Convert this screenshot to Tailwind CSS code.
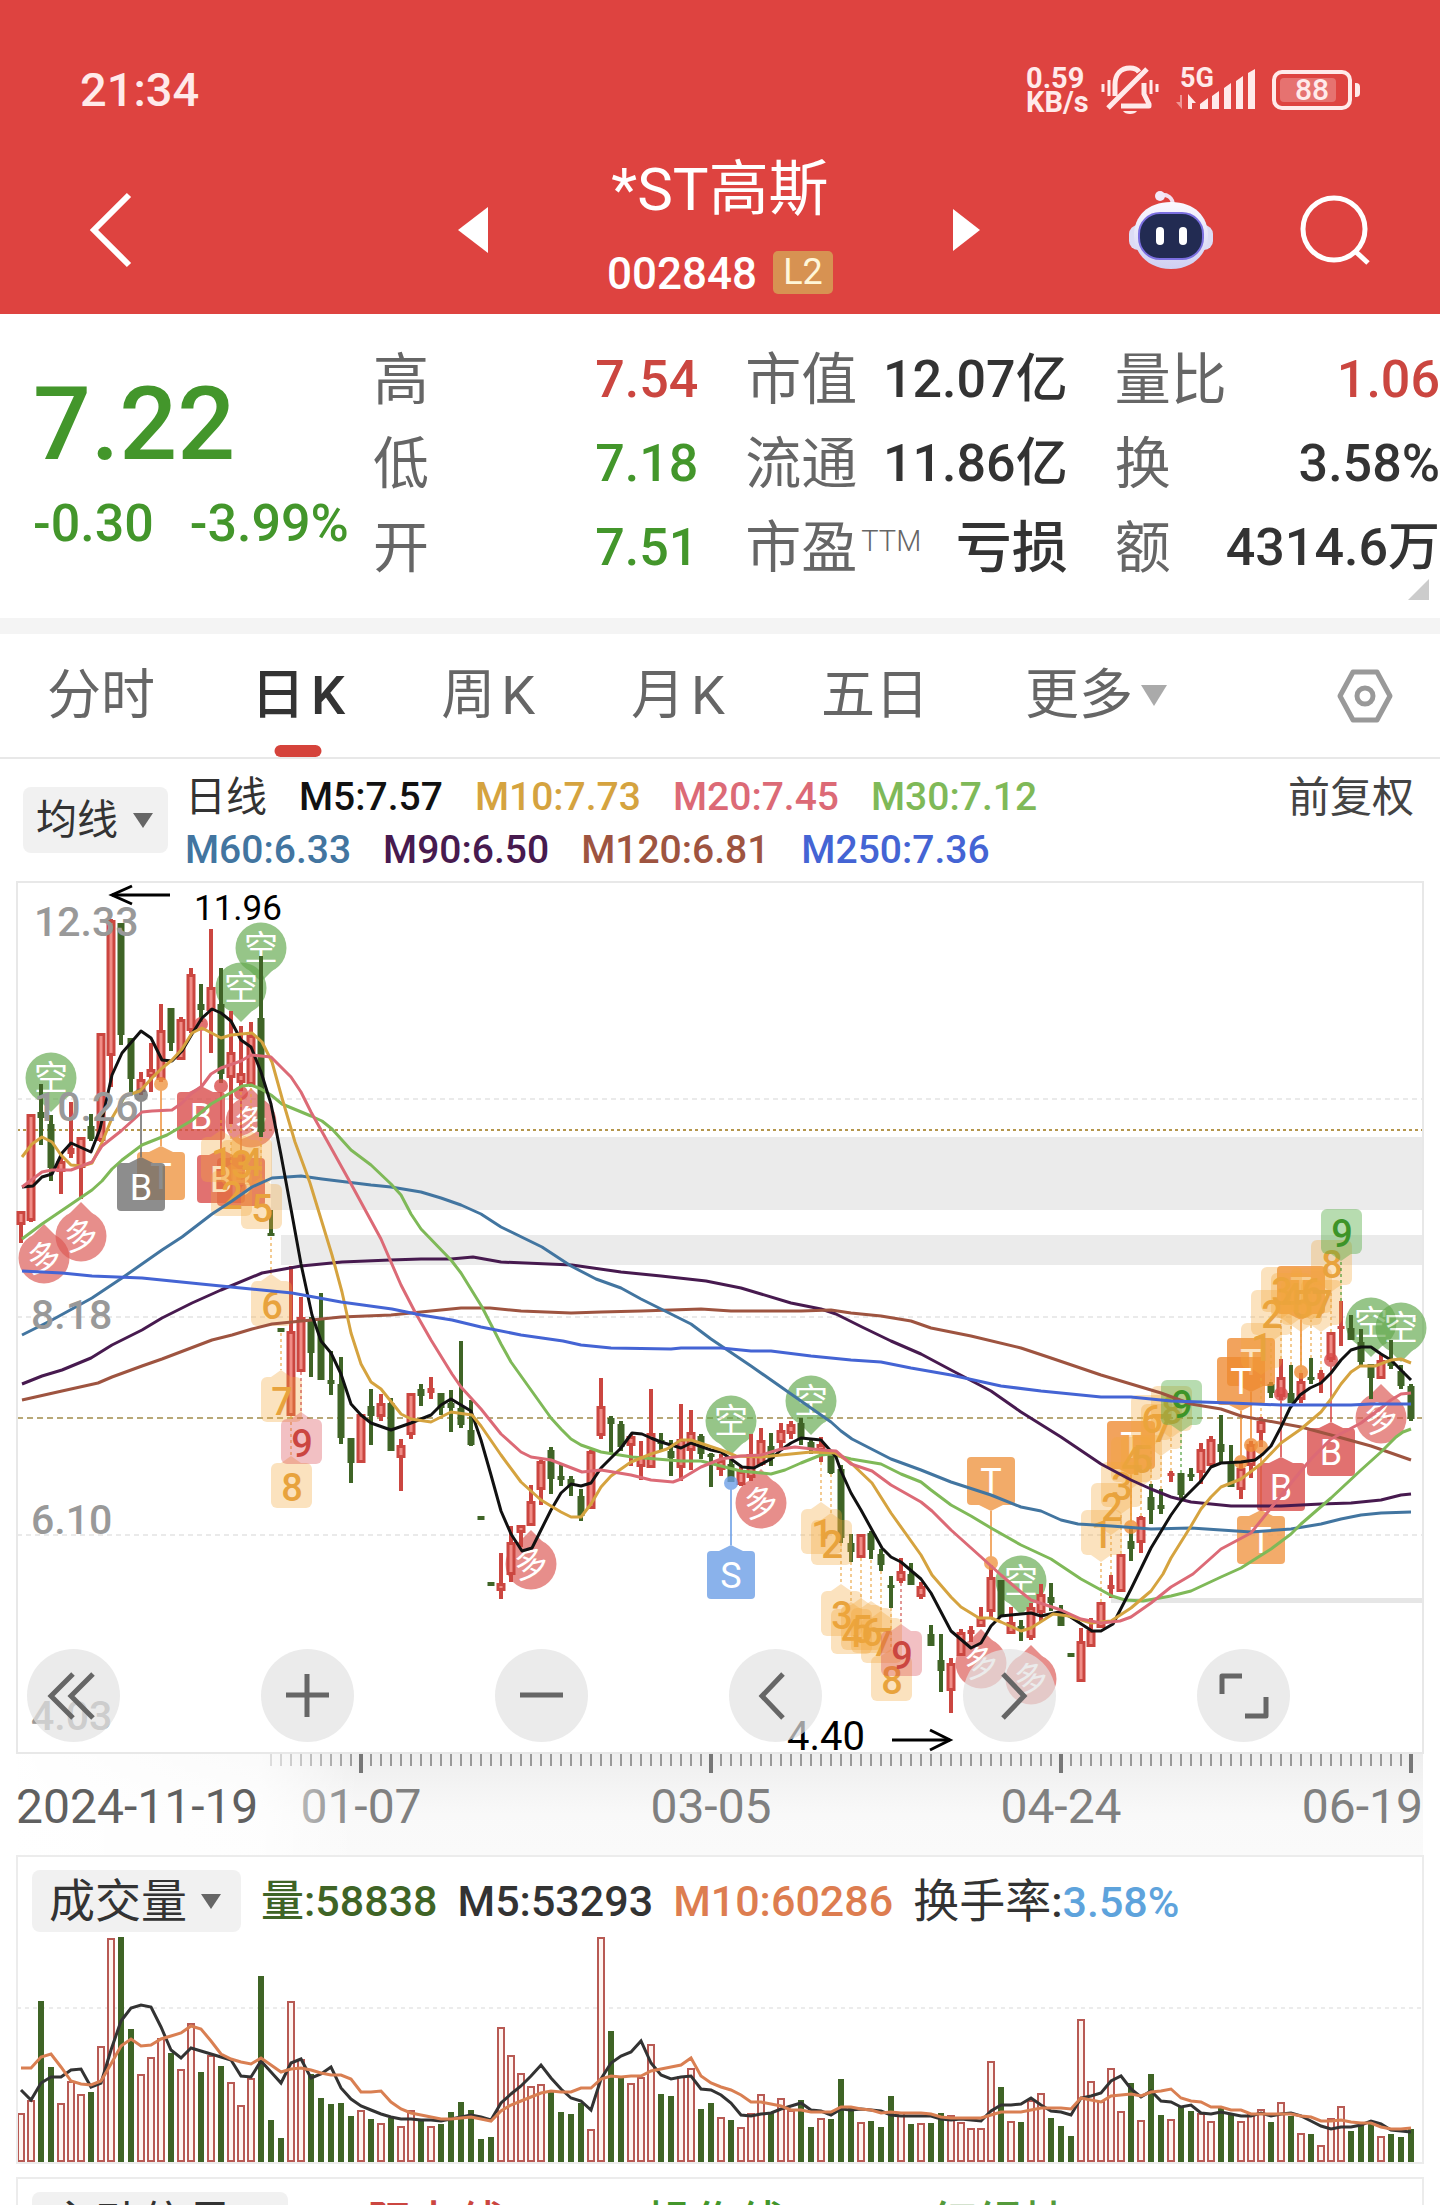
<!DOCTYPE html>
<html lang="zh-CN">
<head>
<meta charset="utf-8">
<meta name="viewport" content="width=device-width, initial-scale=1">
<title>*ST高斯 002848</title>
<script src="https://cdn.jsdelivr.net/npm/@tailwindcss/browser@4"></script>
</head>
<body class="bg-white font-['Roboto','Noto_Sans_CJK_SC',sans-serif] text-[#333] overflow-x-hidden">

<header class="bg-[#de4340] h-[314px] text-white">
  <div class="flex items-center justify-between pt-[56px] pl-20 pr-20 h-[124px] text-[#ffeaea]">
    <time class="text-[47px] leading-[68px] font-medium">21:34</time>
    <div class="flex items-center">
      <div class="text-[29px] leading-[24px] font-bold w-[62px] mr-[13px]">0.59<br>KB/s</div>
      <svg class="w-[58px] h-[50px] mr-[17px]" viewBox="0 0 58 50" fill="none" stroke="currentColor" stroke-width="4" aria-label="静音">
        <path d="M14 31V20C14 9 20 3 29 3c4 0 7 1 9 4M43 18v11l5 10v2H20M7 43L46 4" stroke-linejoin="round" stroke-width="5"/>
        <path d="M22 46h14c-2 4-12 4-14 0z" fill="currentColor" stroke="none"/>
        <path d="M2 19v8M8 15v16M50 15v14M56 19v8" stroke-width="3"/>
      </svg>
      <div class="w-[82px] h-[44px] relative mr-[14px]">
        <span class="absolute left-1 -top-1 text-[27px] leading-[28px] font-bold">5G</span>
        <svg class="w-full h-full" viewBox="0 0 82 44" fill="currentColor" aria-hidden="true">
          <path d="M6 27v14l-6-7h4v-7z" opacity=".5"/><path d="M12 41V26l8 9h-4v6z"/>
          <path d="M24 41v-5l8-6v11zM36 41V28l7-5v18zM48 41V20l7-5v26zM60 41V13l7-5v33zM72 41V5l7-4v40z"/>
        </svg>
      </div>
      <div class="relative flex items-center">
        <div class="w-[80px] h-[40px] rounded-[10px] border-4 border-current p-1">
          <div class="w-[56px] h-full bg-white/25 rounded-sm"></div>
        </div>
        <div class="w-[5px] h-[14px] rounded-r bg-current ml-[3px]"></div>
        <span class="absolute left-0 w-[80px] text-center text-[30px] leading-[40px] font-medium">88</span>
      </div>
    </div>
  </div>
  <div class="grid grid-cols-[1fr_465px_1fr] items-center pt-[26px]">
    <div class="flex items-center justify-between pl-[88px]">
      <button aria-label="返回"><svg class="w-11 h-[76px]" viewBox="0 0 44 76" fill="none" stroke="white" stroke-width="6"><path d="M41 3L6 38l35 35"/></svg></button>
      <button aria-label="上一只"><svg class="w-[30px] h-[46px]" viewBox="0 0 30 46" fill="white"><path d="M30 0v46L0 23z"/></svg></button>
    </div>
    <div class="flex flex-col items-center">
      <h1 class="text-[60px] leading-[80px] whitespace-nowrap">*ST高斯</h1>
      <div class="flex items-center gap-4 h-[80px] pt-1">
        <span class="text-[44px] leading-none font-medium pt-1">002848</span>
        <span class="bg-[#d79252] rounded-[5px] w-[60px] h-[43px] text-center text-[36px] leading-[43px] text-[#fff6d8]">L2</span>
      </div>
    </div>
    <div class="flex items-center">
      <button aria-label="下一只"><svg class="w-[27px] h-[42px]" viewBox="0 0 27 42" fill="white"><path d="M0 0v42l27-21z"/></svg></button>
      <button class="ml-[148px]" aria-label="智能助手"><svg class="w-[86px] h-[82px]" viewBox="0 0 86 82">
        <defs><linearGradient id="shell" x1="0" y1="0" x2="0" y2="1"><stop offset="0" stop-color="#fbf8ff"/><stop offset="1" stop-color="#cfd0f2"/></linearGradient></defs>
        <path d="M32 6c7-1 13 2 13 11" fill="none" stroke="#f3dff0" stroke-width="4"/><circle cx="32" cy="7" r="5" fill="#f3e9fa"/>
        <rect x="1" y="36" width="84" height="25" rx="9" fill="#dcdcf5"/>
        <path d="M43 13c24 0 37 15 37 33S66 80 43 80 6 64 6 46s13-33 37-33z" fill="url(#shell)"/>
        <rect x="11" y="24" width="64" height="46" rx="21" fill="#222b52" stroke="#7b6fe0" stroke-width="2"/>
        <rect x="28" y="38" width="8" height="18" rx="4" fill="white"/><rect x="51" y="38" width="8" height="18" rx="4" fill="white"/>
      </svg></button>
      <button class="ml-[84px]" aria-label="搜索"><svg class="w-[74px] h-[74px]" viewBox="0 0 74 74" fill="none" stroke="white" stroke-width="5"><circle cx="36" cy="36" r="31"/><path d="M57 58l13 12"/></svg></button>
    </div>
  </div>
</header>

<main>
<section class="flex h-[304px] pt-6 relative">
  <div class="w-[373px] pl-[33px] pt-[36px] text-[#43962b] font-medium shrink-0">
    <div class="text-[102px] leading-[100px]">7.22</div>
    <div class="text-[52px] leading-[60px] pt-[20px] whitespace-nowrap flex gap-[36px]"><span>-0.30</span><span>-3.99%</span></div>
  </div>
  <div class="flex-1 grid grid-cols-[325fr_322fr_325fr] gap-x-[47px] text-[52px] leading-[84px] whitespace-nowrap h-[252px]">
    <dl>
      <div class="flex justify-between"><dt class="text-[#666] text-[56px]">高</dt><dd class="font-medium text-[#cb4640]">7.54</dd></div>
      <div class="flex justify-between"><dt class="text-[#666] text-[56px]">低</dt><dd class="font-medium text-[#43962b]">7.18</dd></div>
      <div class="flex justify-between"><dt class="text-[#666] text-[56px]">开</dt><dd class="font-medium text-[#43962b]">7.51</dd></div>
    </dl>
    <dl>
      <div class="flex justify-between"><dt class="text-[#666] text-[56px]">市值</dt><dd class="font-medium">12.07亿</dd></div>
      <div class="flex justify-between"><dt class="text-[#666] text-[56px]">流通</dt><dd class="font-medium">11.86亿</dd></div>
      <div class="flex justify-between"><dt class="text-[#666] text-[56px] flex">市盈<span class="text-[29px] leading-[70px] font-light pl-1">TTM</span></dt><dd class="font-medium text-[56px]">亏损</dd></div>
    </dl>
    <dl>
      <div class="flex justify-between"><dt class="text-[#666] text-[56px]">量比</dt><dd class="font-medium text-[#cb4640]">1.06</dd></div>
      <div class="flex justify-between"><dt class="text-[#666] text-[56px]">换</dt><dd class="font-medium">3.58%</dd></div>
      <div class="flex justify-between"><dt class="text-[#666] text-[56px]">额</dt><dd class="font-medium">4314.6万</dd></div>
    </dl>
  </div>
  <svg class="absolute right-[11px] bottom-[18px] w-[21px] h-[21px]" viewBox="0 0 21 21" fill="#ccc" aria-hidden="true"><path d="M21 0v21H0z"/></svg>
</section>

<div class="h-4 bg-[#f4f4f4]"></div>

<nav class="h-[125px] border-b-2 border-[#e8e8e8] flex items-center pl-[47px] pr-[47px] gap-24 text-[54px] leading-[123px] text-[#666] whitespace-nowrap">
  <button>分时</button>
  <button class="relative text-[#333] font-medium flex gap-[6px]">日<span>K</span><span class="absolute left-1/2 -translate-x-1/2 bottom-0 w-[47px] h-3 rounded-[6px] bg-[#d5433b]"></span></button>
  <button class="flex gap-[6px]">周<span>K</span></button>
  <button class="flex gap-[6px]">月<span>K</span></button>
  <button>五日</button>
  <button class="flex items-center gap-2">更多<svg class="w-[26px] h-[21px]" viewBox="0 0 26 21" fill="#aaa"><path d="M0 0h26L13 21z"/></svg></button>
  <button class="ml-auto" aria-label="设置"><svg class="w-14 h-[54px]" viewBox="0 0 56 54" fill="none" stroke="#999" stroke-width="5" stroke-linejoin="round"><path d="M16 3h24l13 24-13 24H16L3 27z"/><circle cx="28" cy="27" r="8"/></svg></button>
</nav>

<section class="flex items-start h-[114px] pl-[23px] pr-[26px] font-medium whitespace-nowrap">
  <div class="relative mt-7">
    <select aria-label="主图指标" class="appearance-none block bg-[#f1f1f1] rounded-lg w-[145px] h-[66px] pl-[13px] text-[41px] leading-[66px] font-normal"><option>均线</option></select>
    <svg class="absolute right-[15px] top-[26px] w-[20px] h-[15px] pointer-events-none" viewBox="0 0 20 15" fill="#666"><path d="M0 0h20L10 15z"/></svg>
  </div>
  <div class="ml-[17px] text-[39px] leading-[53px] pt-3">
    <div class="flex gap-8"><span class="font-normal text-[41px]">日线</span><span class="text-[#111]">M5:7.57</span><span class="text-[#d5a33f]">M10:7.73</span><span class="text-[#dc6a76]">M20:7.45</span><span class="text-[#7fb958]">M30:7.12</span></div>
    <div class="flex gap-8"><span class="text-[#4275a0]">M60:6.33</span><span class="text-[#471a4f]">M90:6.50</span><span class="text-[#9e5440]">M120:6.81</span><span class="text-[#4464d4]">M250:7.36</span></div>
  </div>
  <button class="ml-auto text-[42px] leading-[53px] pt-3 font-normal text-[#444]">前复权</button>
</section>

<section class="relative">
  <svg id="kline" class="block w-full" viewBox="0 873 1440 982" role="img" aria-label="日K线图"></svg>
  <div class="absolute left-[27px] bottom-[113px] flex gap-[141px]">
    <button aria-label="最早" class="size-[93px] rounded-full bg-[#e3e3e3]/70 grid place-items-center"><svg class="size-[93px]" viewBox="0 0 93 93" fill="none" stroke="#666" stroke-width="5"><path d="M46 25L24 47l22 22M66 25L44 47l22 22"/></svg></button>
    <button aria-label="放大" class="size-[93px] rounded-full bg-[#e3e3e3]/70 grid place-items-center"><svg class="size-[93px]" viewBox="0 0 93 93" fill="none" stroke="#666" stroke-width="5"><path d="M25 46h43M46 25v43"/></svg></button>
    <button aria-label="缩小" class="size-[93px] rounded-full bg-[#e3e3e3]/70 grid place-items-center"><svg class="size-[93px]" viewBox="0 0 93 93" fill="none" stroke="#666" stroke-width="5"><path d="M25 46h43"/></svg></button>
    <button aria-label="左移" class="size-[93px] rounded-full bg-[#e3e3e3]/70 grid place-items-center"><svg class="size-[93px]" viewBox="0 0 93 93" fill="none" stroke="#666" stroke-width="5"><path d="M54 25L33 47l21 22"/></svg></button>
    <button aria-label="右移" class="size-[93px] rounded-full bg-[#e3e3e3]/70 grid place-items-center"><svg class="size-[93px]" viewBox="0 0 93 93" fill="none" stroke="#666" stroke-width="5"><path d="M40 25l21 22-21 22"/></svg></button>
    <button aria-label="全屏" class="size-[93px] rounded-full bg-[#e3e3e3]/70 grid place-items-center"><svg class="size-[93px]" viewBox="0 0 93 93" fill="none" stroke="#666" stroke-width="5" stroke-linejoin="round"><path d="M25 45V27h20M69 48v19H48"/></svg></button>
  </div>
</section>

<section class="ml-4 mr-4 border-2 border-[#ececec]">
  <div class="flex items-center pl-[14px] pt-[13px] h-[75px] text-[43px] font-medium whitespace-nowrap gap-5">
    <div class="relative">
      <select aria-label="副图指标一" class="appearance-none block bg-[#f1f1f1] rounded-lg w-[209px] h-[62px] pl-[17px] text-[46px] leading-[62px] font-normal"><option>成交量</option></select>
      <svg class="absolute right-[20px] top-[24px] w-[20px] h-[15px] pointer-events-none" viewBox="0 0 20 15" fill="#666"><path d="M0 0h20L10 15z"/></svg>
    </div>
    <span class="text-[#3f6426]">量:58838</span>
    <span>M5:53293</span>
    <span class="text-[#dd7d50]">M10:60286</span>
    <span><span class="text-[46px] font-normal">换手率</span>:<span class="text-[#5ea3dc]">3.58%</span></span>
  </div>
  <svg id="volume" class="block w-full" viewBox="18 1932 1404 230" role="img" aria-label="成交量图"></svg>
</section>

<section class="ml-4 mr-4 mt-[13px] border-2 border-b-0 border-[#ececec] h-[28px] overflow-hidden">
  <div class="flex items-center pl-[14px] pt-[13px] text-[46px] leading-[62px] whitespace-nowrap">
    <div class="relative">
      <select aria-label="副图指标二" class="appearance-none block bg-[#f1f1f1] rounded-lg w-[256px] h-[62px] pl-[17px] text-[46px] leading-[62px]"><option>主动信号</option></select>
    </div>
    <svg class="w-9 h-9 ml-[13px]" viewBox="0 0 36 36" fill="none" stroke="#bbb" stroke-width="3"><circle cx="18" cy="18" r="16"/><path d="M14 14c1-5 9-4 8 1-1 3-4 3-4 6M18 25v2"/></svg>
    <span class="font-medium text-[#cb4640] ml-[30px]">阻力线</span>
    <span class="font-medium text-[#43962b] ml-[142px]">操作线</span>
    <span class="font-medium text-[#549a3b] ml-[146px]">红绿持</span>
  </div>
</section>
</main>

<script>
const UP = '#cb4640', DOWN = '#3f6426', X0 = 21, STEP = 10;
const xAt = i => X0 + STEP * i;

// One entry per trading day: direction, then high, body top, body bottom, low (chart units)
const candles = `
r1211,1211,1225,1243 r1114,1114,1221,1222 g1084,1112,1118,1145 g1115,1124,1168,1181 r1156,1161,1172,1194
r1102,1148,1154,1158 r1137,1137,1168,1199 g1114,1126,1139,1141 r1033,1033,1141,1142 r919,920,1056,1087
g923,923,1035,1045 g1038,1038,1079,1092 r1072,1079,1092,1095 r1043,1069,1077,1092 r1004,1030,1080,1082
g1008,1008,1043,1051 r1017,1019,1060,1060 r968,974,1031,1033 g984,1004,1010,1022 r929,987,1011,1053
g968,1004,1074,1083 r1011,1052,1078,1124 r1026,1073,1083,1091 r1022,1035,1085,1087 g956,1018,1132,1137
g1210,1233,1236,1236 g1328,1328,1332,1332 r1266,1331,1416,1416 r1297,1317,1372,1372 g1317,1320,1353,1377
g1293,1319,1380,1380 g1351,1380,1384,1395 g1357,1384,1438,1444 g1438,1438,1463,1483 r1414,1414,1463,1463
g1389,1406,1416,1445 r1394,1403,1417,1421 g1398,1403,1451,1451 r1439,1445,1458,1491 r1393,1393,1435,1439
g1384,1389,1396,1406 r1377,1388,1393,1399 g1393,1393,1408,1415 g1390,1403,1408,1432 g1341,1408,1425,1428
g1400,1430,1445,1446 g1516,1516,1520,1520 g1582,1582,1586,1586 r1553,1583,1591,1599 r1526,1542,1575,1582
r1525,1525,1533,1547 r1485,1501,1526,1526 r1460,1461,1490,1505 g1447,1450,1479,1494 g1465,1476,1480,1486
g1476,1479,1486,1496 g1489,1496,1516,1521 r1450,1451,1509,1509 r1378,1406,1436,1439 g1416,1418,1424,1454
g1421,1424,1447,1451 r1434,1436,1446,1466 r1441,1456,1467,1480 r1389,1433,1468,1468 g1433,1440,1444,1451
g1440,1451,1458,1476 r1404,1439,1468,1481 r1410,1432,1451,1470 g1434,1436,1454,1459 g1453,1454,1457,1487
r1454,1460,1470,1476 g1460,1464,1482,1482 r1467,1471,1485,1486 r1434,1454,1478,1481 r1428,1440,1465,1466
g1433,1446,1459,1466 r1423,1430,1443,1451 r1421,1424,1434,1439 g1418,1423,1439,1445 g1438,1442,1449,1454
r1437,1444,1451,1462 g1451,1453,1473,1474 g1465,1469,1538,1543 g1534,1543,1552,1562 r1534,1534,1558,1558
g1531,1533,1550,1559 g1549,1554,1565,1571 g1576,1585,1588,1608 r1558,1571,1581,1583 g1563,1574,1585,1585
r1582,1586,1597,1599 g1625,1634,1646,1646 g1634,1660,1671,1692 r1658,1663,1691,1713 r1629,1632,1656,1656
r1626,1630,1634,1642 r1607,1618,1627,1627 r1565,1577,1612,1617 g1580,1580,1617,1617 r1607,1622,1634,1634
g1620,1626,1630,1641 r1603,1607,1638,1640 r1584,1594,1613,1622 g1583,1597,1603,1611 g1605,1613,1626,1626
g1653,1653,1657,1657 r1628,1641,1682,1682 r1618,1630,1647,1647 r1602,1602,1628,1628 r1575,1585,1589,1598
r1554,1554,1592,1592 g1528,1541,1549,1561 r1516,1517,1543,1553 g1484,1497,1510,1524 g1489,1505,1509,1514
r1471,1473,1476,1482 g1473,1473,1495,1498 g1468,1474,1477,1481 r1443,1449,1473,1484 r1436,1439,1466,1466
g1415,1444,1452,1462 g1445,1463,1487,1487 r1462,1468,1490,1499 r1441,1444,1466,1478 r1417,1421,1433,1447
g1382,1384,1393,1398 r1359,1377,1397,1400 g1365,1393,1403,1403 r1373,1381,1400,1403 g1358,1377,1380,1384
r1370,1373,1379,1393 r1332,1332,1360,1362 r1301,1326,1329,1346 g1315,1328,1340,1340 g1329,1342,1362,1366
g1364,1364,1378,1399 r1355,1360,1379,1379 g1340,1360,1366,1369 g1365,1371,1386,1389 g1384,1386,1419,1421
`.trim().split(/\s+/).map(s => ({ up: s[0] === 'r', v: s.slice(1).split(',').map(Number) }));

const volumes = [49,62,161,95,59,81,68,70,116,224,225,133,88,105,124,109,93,139,90,107,96,80,57,84,186,42,24,161,103,88,64,58,59,46,52,43,39,44,36,52,41,36,38,50,60,52,23,25,135,107,89,76,78,70,50,48,59,33,225,131,84,79,85,118,68,66,86,94,53,59,45,42,35,49,68,49,64,52,62,35,44,43,83,54,40,41,35,66,50,38,39,39,49,47,40,34,34,101,75,41,40,62,69,44,36,26,143,81,61,94,51,79,42,88,47,43,56,51,49,41,54,47,41,48,53,40,60,46,29,28,17,44,56,31,37,39,26,28,25,33];

const averages = [
  ['#471a4f', '22,1384 42,1376 62,1370 91,1358 112,1345 142,1330 162,1318 192,1303 221,1290 262,1273 301,1266 342,1262 390,1260 421,1259 451,1259 473,1257 501,1262 572,1265 621,1272 661,1276 706,1281 741,1288 791,1303 821,1309 836,1314 862,1327 891,1341 921,1354 951,1370 991,1391 1021,1412 1061,1437 1101,1464 1131,1480 1151,1489 1171,1497 1191,1502 1231,1506 1281,1506 1321,1504 1351,1503 1381,1500 1401,1495 1411,1494'],
  ['#9e5440', '22,1400 62,1391 98,1383 112,1377 142,1366 162,1359 212,1340 232,1335 252,1329 272,1324 292,1322 341,1317 391,1315 421,1312 461,1308 490,1308 521,1311 571,1313 601,1312 641,1311 701,1309 731,1311 801,1311 831,1310 851,1313 881,1316 911,1321 931,1328 971,1336 1021,1348 1051,1358 1101,1375 1141,1387 1161,1393 1191,1404 1221,1409 1241,1416 1301,1427 1331,1435 1371,1446 1411,1460'],
  ['#4275a0', '22,1335 52,1320 92,1298 122,1278 162,1250 182,1237 212,1214 232,1201 252,1187 272,1178 301,1176 322,1179 371,1185 391,1187 421,1192 441,1198 461,1205 481,1214 501,1227 542,1247 571,1266 596,1279 621,1288 641,1299 691,1324 711,1339 751,1366 801,1401 831,1422 841,1431 852,1439 891,1459 921,1470 951,1482 991,1495 1021,1507 1041,1511 1061,1520 1078,1524 1111,1526 1151,1529 1191,1528 1221,1530 1251,1532 1291,1529 1321,1524 1341,1519 1361,1515 1381,1513 1411,1512'],
  ['#7fb958', '22,1239 42,1224 92,1190 102,1181 112,1169 122,1160 142,1145 167,1135 191,1121 211,1104 232,1092 242,1086 251,1085 261,1089 271,1095 282,1104 311,1116 322,1121 332,1129 351,1150 371,1165 391,1184 401,1195 411,1214 421,1229 451,1260 461,1273 482,1307 501,1344 511,1362 531,1390 551,1418 561,1429 571,1439 581,1445 601,1452 632,1457 681,1461 701,1461 721,1466 741,1471 771,1474 785,1470 801,1463 821,1455 831,1454 851,1459 881,1464 901,1474 921,1482 931,1490 951,1505 971,1516 991,1528 1021,1545 1051,1559 1081,1579 1112,1596 1125,1600 1143,1601 1171,1596 1191,1591 1221,1577 1241,1568 1271,1549 1291,1534 1301,1524 1331,1498 1361,1470 1381,1452 1396,1437 1403,1432 1411,1429'],
  ['#111111', '22,1187 33,1186 42,1177 52,1174 62,1153 71,1143 91,1152 100,1129 112,1075 122,1053 141,1031 151,1038 162,1060 172,1061 182,1051 192,1034 202,1018 212,1009 221,1013 231,1021 241,1040 251,1047 261,1072 271,1104 281,1155 291,1209 301,1264 312,1315 321,1341 331,1353 341,1374 351,1404 361,1415 371,1423 391,1430 411,1423 431,1415 441,1405 451,1399 471,1411 481,1440 491,1475 501,1511 511,1534 522,1551 532,1548 541,1530 551,1510 561,1493 571,1484 581,1486 591,1483 601,1468 621,1448 632,1433 642,1434 651,1438 661,1442 681,1448 691,1443 711,1450 721,1452 731,1459 742,1467 754,1468 771,1459 781,1450 791,1443 801,1438 821,1440 836,1457 841,1471 851,1493 861,1510 872,1530 882,1548 891,1557 901,1562 921,1579 931,1593 951,1631 971,1648 981,1643 991,1626 1001,1616 1031,1613 1041,1616 1059,1612 1069,1616 1092,1631 1101,1631 1113,1624 1131,1589 1151,1548 1171,1515 1181,1501 1191,1491 1201,1481 1211,1467 1221,1463 1241,1462 1255,1460 1263,1454 1271,1446 1281,1427 1290,1408 1300,1395 1310,1388 1321,1383 1331,1373 1341,1360 1351,1350 1361,1347 1371,1347 1381,1354 1391,1360 1401,1370 1411,1380'],
  ['#d5a33f', '22,1157 32,1144 42,1137 52,1142 61,1155 71,1165 82,1166 92,1163 101,1145 112,1118 125,1096 140,1091 151,1079 161,1069 172,1060 182,1049 192,1033 202,1028 221,1038 231,1035 252,1033 262,1042 272,1062 282,1098 295,1142 310,1183 332,1255 342,1292 351,1333 361,1364 371,1382 381,1389 401,1414 411,1419 431,1422 451,1412 472,1415 481,1426 501,1455 521,1482 541,1500 561,1512 571,1517 581,1517 591,1504 601,1487 611,1476 631,1462 651,1454 667,1449 681,1440 691,1440 721,1450 736,1456 761,1457 781,1455 811,1452 835,1453 851,1463 872,1483 891,1513 921,1555 932,1575 951,1597 961,1607 979,1618 991,1618 1001,1622 1021,1631 1031,1628 1053,1614 1069,1616 1091,1623 1111,1621 1131,1608 1151,1591 1163,1574 1171,1558 1191,1526 1201,1509 1211,1497 1221,1487 1241,1479 1261,1464 1281,1443 1301,1429 1321,1412 1331,1399 1341,1384 1351,1372 1360,1366 1375,1366 1391,1360 1401,1359 1411,1363'],
  ['#dc6a76', '22,1187 42,1172 52,1170 71,1170 92,1162 102,1146 121,1131 142,1112 152,1111 172,1110 182,1103 192,1093 202,1086 211,1074 221,1068 241,1061 251,1055 271,1057 281,1067 291,1077 301,1092 311,1112 330,1146 350,1182 381,1239 401,1285 415,1312 431,1340 452,1374 461,1387 481,1409 501,1434 521,1452 531,1457 551,1460 582,1472 601,1470 631,1475 651,1480 673,1482 681,1479 701,1467 721,1459 741,1456 761,1455 781,1449 795,1447 821,1450 836,1451 851,1464 872,1471 891,1485 921,1502 932,1511 951,1530 980,1556 1001,1575 1021,1592 1031,1600 1061,1610 1081,1619 1101,1623 1120,1621 1131,1617 1151,1603 1171,1587 1193,1574 1211,1558 1221,1549 1251,1533 1271,1508 1291,1483 1311,1459 1331,1439 1361,1423 1381,1408 1391,1400 1401,1394 1411,1393'],
  ['#4464d4', '22,1271 62,1273 92,1276 142,1278 201,1284 241,1288 292,1293 341,1302 392,1309 421,1315 452,1320 481,1327 521,1335 563,1341 581,1345 611,1348 671,1349 681,1348 721,1348 751,1351 771,1351 811,1356 851,1360 881,1362 911,1368 951,1375 1001,1386 1041,1391 1101,1397 1131,1397 1171,1401 1231,1403 1281,1405 1351,1405 1371,1404 1411,1404']
];

// Sequence counts: x, tag top, digit, tail side (u = tag below price, d = tag above), tone, candle end of the leader
const counts = [
  [221,1137,1,'u','o',1120],[231,1171,2,'u','o',1124],[241,1140,3,'u','o',1092],[251,1138,4,'u','o',1088],[261,1184,5,'u','o',1138],
  [271,1281,6,'u','o',1237],[281,1377,7,'u','o',1333],[291,1463,8,'u','o',1416],[301,1419,9,'u','r',1372],
  [821,1509,1,'u','o',1462],[831,1520,2,'u','o',1474],[841,1591,3,'u','o',1543],[851,1609,4,'u','o',1562],[861,1605,5,'u','o',1558],
  [871,1608,6,'u','o',1560],[881,1618,7,'u','o',1571],[891,1656,8,'u','o',1608],[901,1631,9,'u','r',1583],
  [1101,1510,1,'d','o',1602],[1111,1483,2,'d','o',1575],[1121,1462,3,'d','o',1554],[1131,1437,4,'d','o',1528],[1141,1435,5,'d','o',1516],
  [1151,1395,6,'d','o',1484],[1161,1404,7,'d','o',1489],[1171,1386,8,'d','o',1471],[1181,1380,9,'d','g',1473],
  [1261,1323,1,'d','o',1417],[1271,1290,2,'d','o',1382],[1281,1267,3,'d','o',1359],[1291,1273,4,'d','o',1365],[1301,1280,5,'d','o',1373],
  [1311,1268,6,'d','o',1358],[1321,1280,7,'d','o',1370],[1331,1240,8,'d','o',1332],[1341,1209,9,'d','g',1301]
];
const tones = { o: ['#f2a93c55', '#e8a33d'], r: ['#d8424a55', '#cb4640'], g: ['#4aa83a66', '#3d9428'] };

// Trade marks: x, box top, letter, colour, tail side, y of the dot on the candle
const trades = [
  [161,1152,'T','#ef9440','u',1084],[141,1163,'B','#6e6e6e','u',1095],[201,1092,'B','#d94a48','u',1024],
  [241,1158,'B','#d94a48','u',1093],[221,1155,'B','#d94a48','u',1086],[731,1551,'S','#6a9de6','u',1483],
  [991,1457,'T','#ef9440','d',1563],[1131,1421,'T','#ef8a30','d',1527],[1251,1338,'T','#ef8a30','d',1445],
  [1241,1357,'T','#ef8a30','d',1462],[1301,1266,'T','#ef8a30','d',1372],[1261,1516,'T','#ef9440','u',1447],
  [1281,1463,'B','#d94a48','u',1394],[1331,1428,'B','#d94a48','u',1360]
];

// Long / short bubbles: x, y, kind
const bubbles = [
  [51,1078,'空'],[261,948,'空'],[241,988,'空'],[731,1421,'空'],[811,1401,'空'],[1021,1581,'空'],[1371,1323,'空'],[1401,1328,'空'],
  [44,1258,'多'],[81,1236,'多'],[251,1122,'多'],[531,1564,'多'],[761,1503,'多'],[981,1663,'多'],[1031,1679,'多'],[1381,1418,'多']
];

const line = (x1, y1, x2, y2, c, w = 2, extra = '') => `<path d="M${x1} ${y1}L${x2} ${y2}" stroke="${c}" stroke-width="${w}" fill="none" ${extra}/>`;
const text = (x, y, s, size, fill, extra = '') => `<text x="${x}" y="${y}" font-size="${size}" fill="${fill}" ${extra}>${s}</text>`;

let k = `<defs>
  <linearGradient id="axisShade" x1="0" y1="0" x2="0" y2="1"><stop offset="0" stop-color="#eeeeee"/><stop offset=".6" stop-color="#f9f9f9"/><stop offset="1" stop-color="#fafafa"/></linearGradient>
  <linearGradient id="axisFade"><stop offset="0" stop-color="#fff"/><stop offset=".72" stop-color="#fff" stop-opacity=".75"/><stop offset="1" stop-color="#fff" stop-opacity="0"/></linearGradient>
</defs>`;
k += '<rect x="271" y="1137" width="1152" height="73" fill="#ebebeb"/><rect x="281" y="1235" width="1142" height="30" fill="#ebebeb"/><rect x="1111" y="1598" width="312" height="5" fill="#e6e6e6"/>';
for (const y of [1099, 1317, 1535]) k += line(17, y, 1423, y, '#e3e3e3', 1.5, 'stroke-dasharray="5 4"');
k += line(17, 1130, 1423, 1130, '#b5964c', 2, 'stroke-dasharray="3 3"') + line(17, 1418, 1423, 1418, '#b8a877', 2, 'stroke-dasharray="6 4"');
k += '<rect x="17" y="882" width="1406" height="871" fill="none" stroke="#e8e8e8" stroke-width="2"/>';

for (const [x, y, s] of bubbles) {
  const down = s === '空', d = down ? 1 : -1, c = down ? '#65aa50' : '#dd5a55';
  k += `<g opacity=".68"><path d="M${x - 12} ${y + d * 22}L${x} ${y + d * 34}L${x + 12} ${y + d * 22}z" fill="${c}"/><circle cx="${x}" cy="${y}" r="25.5" fill="${c}"/>${text(x, y + 12, s, 34, '#fff', `text-anchor="middle" transform="rotate(${down ? 0 : -12} ${x} ${y})"`)}</g>`;
}

candles.forEach(({ up, v: [h, t, b, l] }, i) => {
  const x = xAt(i), c = up ? UP : DOWN;
  k += line(x, h, x, l, c, 4);
  k += up && b - t > 6
    ? `<rect x="${x - 3}" y="${t + 1.5}" width="6" height="${b - t - 3}" fill="#f08c86" stroke="${c}" stroke-width="3"/>`
    : `<rect x="${x - 3.5}" y="${t}" width="7" height="${Math.max(b - t, 3)}" fill="${c}"/>`;
});

for (const [x, y, s, c, side, dot] of trades) {
  const top = side === 'u', edge = top ? y : y + 48, tip = top ? y - 6 : y + 54;
  k += `<g opacity=".78">${line(x, dot, x, tip, c, 2)}<circle cx="${x}" cy="${dot}" r="7" fill="${c}"/>
    <rect x="${x - 24}" y="${y}" width="48" height="48" rx="4" fill="${c}"/><path d="M${x - 12} ${edge}L${x} ${tip}L${x + 12} ${edge}z" fill="${c}"/></g>`;
  k += text(x, y + 37, s, 36, '#fff', 'text-anchor="middle"');
}
for (const [x, y, n, side, tone, end] of counts) {
  const [bg, fg] = tones[tone], top = side === 'u', edge = top ? y : y + 45, tip = top ? y - 7 : y + 52;
  k += line(x, end, x, tip, fg, 1.5, 'stroke-dasharray="3 3" opacity=".75"');
  k += `<rect x="${x - 20}" y="${y}" width="41" height="45" rx="6" fill="${bg}"/><path d="M${x - 10} ${edge}L${x} ${tip}L${x + 10} ${edge}z" fill="${bg}"/>`;
  k += text(x + 1, y + 38, n, 38, fg, 'text-anchor="middle" font-weight="500"');
}

for (const [c, pts] of averages) k += `<polyline points="${pts}" fill="none" stroke="${c}" stroke-width="3" stroke-linejoin="round"/>`;

for (const [x, y, s] of [[34, 936, '12.33'], [34, 1121, '10.26'], [31, 1329, '8.18'], [31, 1534, '6.10'], [31, 1730, '4.03']])
  k += text(x, y, s, 41, '#999', 'font-weight="500"');
k += text(194, 920, '11.96', 35, '#000') + line(112, 895, 170, 895, '#000', 3) + '<path d="M132 886L112 895L132 904" fill="none" stroke="#000" stroke-width="3"/>';
k += text(787, 1750, '4.40', 40, '#000') + line(892, 1740, 950, 1740, '#000', 3) + '<path d="M930 1730L950 1740L930 1750" fill="none" stroke="#000" stroke-width="3"/>';

k += '<rect x="17" y="1754" width="1406" height="101" fill="url(#axisShade)"/>';
for (let i = 25; i < 140; i++) {
  const major = i % 35 === 34;
  k += line(xAt(i), 1754, xAt(i), major ? 1773 : 1766, major ? '#777' : '#999', major ? 4 : 2);
}
k += text(361, 1823, '01-07', 48, '#808080', 'text-anchor="middle"') + '<rect x="0" y="1754" width="360" height="101" fill="url(#axisFade)"/>';
k += text(16, 1823, '2024-11-19', 48, '#606060') + text(711, 1823, '03-05', 48, '#808080', 'text-anchor="middle"');
k += text(1061, 1823, '04-24', 48, '#808080', 'text-anchor="middle"') + text(1423, 1823, '06-19', 48, '#808080', 'text-anchor="end"');
document.getElementById('kline').innerHTML = k;

const BASE = 2162;
let v = line(17, 2008, 1423, 2008, '#e6e6e6', 1.5, 'stroke-dasharray="4 4"');
volumes.forEach((h, i) => {
  const x = xAt(i);
  v += candles[i].up
    ? `<rect x="${x - 3}" y="${BASE - h + 1}" width="6" height="${h - 2}" fill="#fff4f0" stroke="#b85a54" stroke-width="2"/>`
    : `<rect x="${x - 3}" y="${BASE - h}" width="6" height="${h}" fill="${DOWN}"/>`;
});
// Leading values come from days before the visible range
const average = (n, lead) => volumes.map((_, i) => {
  const a = i < lead.length ? lead[i] : volumes.slice(i - n + 1, i + 1).reduce((s, q) => s + q, 0) / n;
  return `${xAt(i)},${Math.round(BASE - a)}`;
}).join(' ');
v += `<polyline points="${average(5, [72, 62, 79, 85])}" fill="none" stroke="#333" stroke-width="3"/>`;
v += `<polyline points="${average(10, [94, 94, 105, 108, 95, 81, 78, 77, 81])}" fill="none" stroke="#d97f52" stroke-width="3"/>`;
document.getElementById('volume').innerHTML = v;
</script>
</body>
</html>
